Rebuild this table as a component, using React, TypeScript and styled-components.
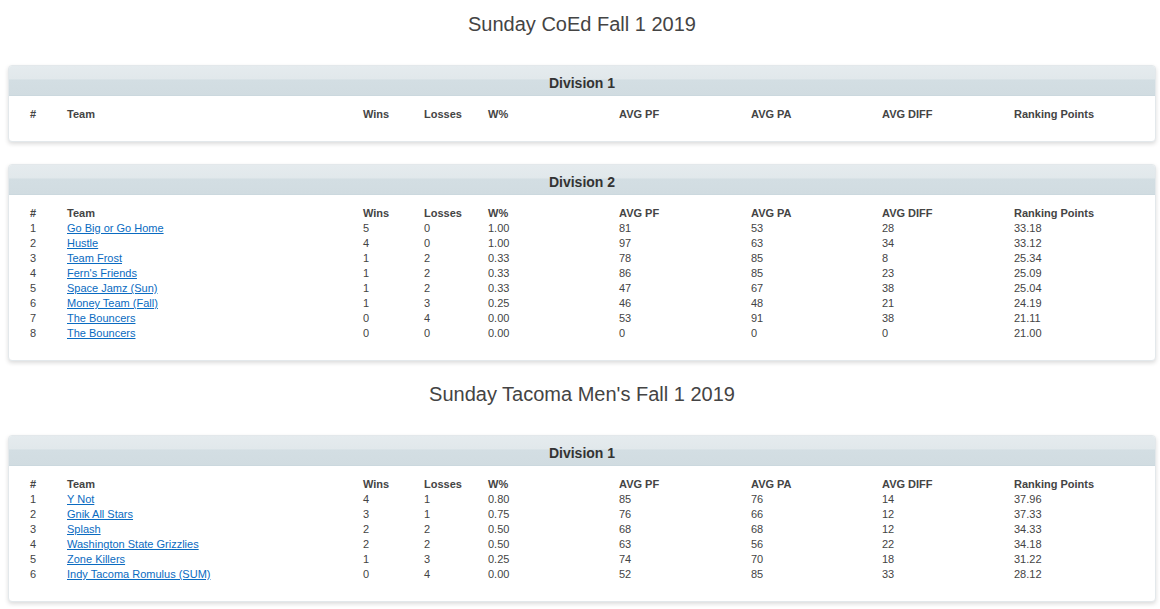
import React from "react";
import styled, { createGlobalStyle } from "styled-components";

const Global = createGlobalStyle`
  html, body { margin: 0; padding: 0; background: #fff; }
  body { font-family: "Liberation Sans", Arial, Helvetica, sans-serif; color: #444; }
`;

const Page = styled.div`
  padding: 13px 4px 0 8px;
`;

const Title = styled.h2`
  margin: 0 0 29px;
  font-size: 20px;
  line-height: 23px;
  font-weight: normal;
  text-align: center;
  color: #444;
`;

const Panel = styled.section`
  margin: 0 0 22px;
  background: #fff;
  border: 1px solid #e3e8eb;
  border-radius: 4px;
  box-shadow: 0 2px 4px rgba(0, 0, 0, 0.14);
  overflow: hidden;
`;

const PanelHeader = styled.div`
  height: 30px;
  border-bottom: 1px solid #cbd8de;
  background: linear-gradient(to bottom, #e5ebee 0%, #e1e8eb 46%, #d3dee3 47%, #d1dce1 100%);
  display: flex;
  align-items: center;
  justify-content: center;
  padding-top: 5px;
  box-sizing: border-box;
  font-size: 14px;
  font-weight: bold;
  color: #333;
`;

const Table = styled.div`
  padding: 11px 0 19px 21px;
  display: grid;
  grid-template-columns: 37px 296px 61px 64px 131px 132px 131px 132px 1fr;
  font-size: 11px;
  line-height: 15px;
`;

const Cell = styled.div<{ $head?: boolean }>`
  font-weight: ${(p) => (p.$head ? "bold" : "normal")};
  color: #444;
  white-space: nowrap;
`;

const TeamLink = styled.a`
  color: #0a6bc1;
  text-decoration: underline;
`;

type Row = [string, string, string, string, string, string, string, string, string];

const heads = ["#", "Team", "Wins", "Losses", "W%", "AVG PF", "AVG PA", "AVG DIFF", "Ranking Points"];

const StandingsTable: React.FC<{ rows: Row[] }> = ({ rows }) => (
  <Table>
    {heads.map((h) => (
      <Cell $head key={h}>{h}</Cell>
    ))}
    {rows.map((r, i) =>
      r.map((c, j) => (
        <Cell key={`${i}-${j}`}>
          {j === 1 ? <TeamLink href="#">{c}</TeamLink> : c}
        </Cell>
      ))
    )}
  </Table>
);

const Division: React.FC<{ name: string; rows: Row[] }> = ({ name, rows }) => (
  <Panel>
    <PanelHeader>{name}</PanelHeader>
    <StandingsTable rows={rows} />
  </Panel>
);

const coed2: Row[] = [
  ["1", "Go Big or Go Home", "5", "0", "1.00", "81", "53", "28", "33.18"],
  ["2", "Hustle", "4", "0", "1.00", "97", "63", "34", "33.12"],
  ["3", "Team Frost", "1", "2", "0.33", "78", "85", "8", "25.34"],
  ["4", "Fern's Friends", "1", "2", "0.33", "86", "85", "23", "25.09"],
  ["5", "Space Jamz (Sun)", "1", "2", "0.33", "47", "67", "38", "25.04"],
  ["6", "Money Team (Fall)", "1", "3", "0.25", "46", "48", "21", "24.19"],
  ["7", "The Bouncers", "0", "4", "0.00", "53", "91", "38", "21.11"],
  ["8", "The Bouncers", "0", "0", "0.00", "0", "0", "0", "21.00"],
];

const men1: Row[] = [
  ["1", "Y Not", "4", "1", "0.80", "85", "76", "14", "37.96"],
  ["2", "Gnik All Stars", "3", "1", "0.75", "76", "66", "12", "37.33"],
  ["3", "Splash", "2", "2", "0.50", "68", "68", "12", "34.33"],
  ["4", "Washington State Grizzlies", "2", "2", "0.50", "63", "56", "22", "34.18"],
  ["5", "Zone Killers", "1", "3", "0.25", "74", "70", "18", "31.22"],
  ["6", "Indy Tacoma Romulus (SUM)", "0", "4", "0.00", "52", "85", "33", "28.12"],
];

export default function App() {
  return (
    <>
      <Global />
      <Page>
        <Title>Sunday CoEd Fall 1 2019</Title>
        <Division name="Division 1" rows={[]} />
        <Division name="Division 2" rows={coed2} />
        <Title>Sunday Tacoma Men's Fall 1 2019</Title>
        <Division name="Division 1" rows={men1} />
      </Page>
    </>
  );
}
